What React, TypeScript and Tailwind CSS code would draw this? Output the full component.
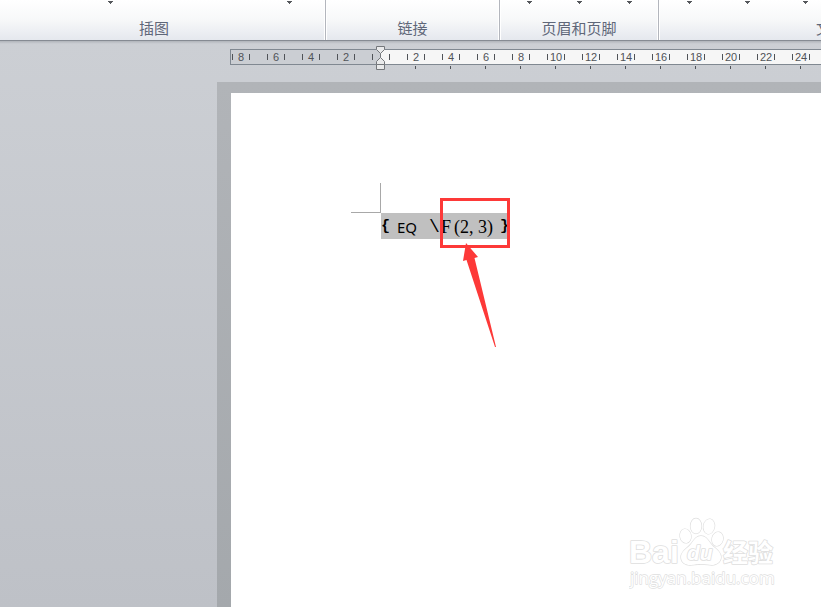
import clsx from 'clsx'

type Group = { label: string; size: string; menus: string[]; menuClass: string }

const GROUPS: Group[] = [
  { label: '插图', size: 'w-[324px] pr-4', menus: ['形状', '屏幕截图'], menuClass: 'w-[179px] first:ml-[21px]' },
  { label: '链接', size: 'w-[171px]', menus: [], menuClass: '' },
  { label: '页眉和页脚', size: 'w-[156px]', menus: ['页眉', '页脚', '页码'], menuClass: 'w-[50px] first:ml-[3px]' },
  { label: '文本', size: 'w-[342px]', menus: ['文本框', '文档部件', '艺术字'], menuClass: 'w-[58px]' },
]

// Ruler cells, two characters each. 0 is the left indent.
const RULER = [-8, -6, -4, -2, 0, 2, 4, 6, 8, 10, 12, 14, 16, 18, 20, 22, 24]

function Ribbon() {
  return (
    <header className="flex h-[41px] overflow-hidden border-b border-[#868b93] bg-linear-to-b from-white via-[#f7f8f9] to-[#e5e8ee]">
      {GROUPS.map((g, i) => (
        <div key={g.label} className="flex shrink-0">
          {i > 0 && <div className="w-[3px] border-x border-white bg-[#b3b6bd]" />}
          <section aria-label={g.label} className={clsx('flex shrink-0 flex-col', g.size)}>
            <div className="-mr-4 flex h-[19px]">
              {g.menus.map((m) => (
                <button key={m} aria-label={m} className={clsx('flex shrink-0 justify-center pt-px', g.menuClass)}>
                  <svg width="5" height="3" viewBox="0 0 5 3" shapeRendering="crispEdges" fill="#55585c">
                    <path d="M0 0h5v1H4v1H3v1H2V2H1V1H0z" />
                  </svg>
                </button>
              ))}
            </div>
            <div className="text-center text-[15px] leading-5 text-[#5f6779]">{g.label}</div>
          </section>
        </div>
      ))}
    </header>
  )
}

function IndentMarker() {
  return (
    <svg className="absolute -top-[3px] left-[146px]" width="9" height="25" viewBox="0 0 9 25" fill="#e9eaeb" stroke="#74777b">
      <path d="M.5.5h8v3l-4 4-4-4z" />
      <path d="M4.5 11.5l4 4v3h-8v-3z" />
      <path d="M.5 18.5h8v5h-8z" />
      <path d="M4.5 7.5v4" />
    </svg>
  )
}

function Ruler() {
  return (
    <div className="relative ml-[230px] text-[11px] text-[#505358]">
      <div className="flex h-4 overflow-hidden border border-r-0 border-[#808891] bg-[linear-gradient(90deg,#cbced3_150px,#f6f6f6_150px)]">
        <div className="-ml-2 flex">
          {RULER.map((n) => (
            <div key={n} className="flex w-[35px] shrink-0 items-center justify-between pr-2 pl-[9px]">
              <i className="h-1.5 w-px bg-[#505358]" />
              {n !== 0 && <span className="leading-[14px]">{Math.abs(n)}</span>}
              <i className="h-1.5 w-px bg-[#505358]" />
            </div>
          ))}
        </div>
      </div>
      <div className="flex h-[17px] overflow-hidden pt-px">
        <div className="ml-[168px] flex">
          {RULER.filter((n) => n > 0).map((n) => (
            <div key={n} className="flex w-[35px] shrink-0 justify-center">
              <i className="h-[3px] w-px bg-[#505358]" />
            </div>
          ))}
        </div>
      </div>
      <IndentMarker />
    </div>
  )
}

function FieldCode() {
  return (
    <div className="relative ml-[150px] flex h-[26px] w-[128px] items-center bg-[#c0c0c0] pt-0.5 font-['Liberation_Serif',serif] text-lg leading-6 whitespace-pre text-black">
      {/* margin corner */}
      <div className="absolute right-full bottom-full size-[30px] border-r border-b border-[#a8a8a8]" />
      <b className="w-4 font-['Liberation_Mono',monospace] text-[15px]">{'{'}</b>
      <span className="w-8 font-['Noto_Sans',sans-serif] text-[15px]">EQ</span>
      <span className="w-3 font-['Liberation_Mono',monospace]">\</span>
      <span className="w-[13px]">F</span>
      <span className="w-6">(2,</span>
      <span>3)</span>
      <b className="ml-auto font-['Liberation_Mono',monospace] text-[15px]">{'}'}</b>
      {/* callout */}
      <div className="absolute -top-[15px] left-[59px] h-[50px] w-[70px] border-3 border-[#fd3938]" />
      <svg className="absolute top-[30px] left-20" width="36" height="105" viewBox="0 0 36 105" fill="#fd3938">
        <path d="M5 0L17 14L13.5 15L35 104L34 104L5.500 17L2 18Z" />
      </svg>
    </div>
  )
}

function Watermark() {
  return (
    <svg
      className="absolute right-[44px] bottom-[16px]"
      width="148"
      height="76"
      viewBox="0 0 148 76"
      fill="#fff"
      stroke="#dedede"
      strokeWidth="1.6"
      strokeLinejoin="round"
      paintOrder="stroke"
      fontFamily="'Liberation Sans', sans-serif"
    >
      <text x="0" y="48" fontSize="32" fontWeight="700">Bai</text>
      <g strokeWidth="1.3">
        <ellipse cx="56.5" cy="21" rx="5.5" ry="7" transform="rotate(-10 56.5 21)" />
        <ellipse cx="67" cy="11" rx="5.5" ry="7.5" />
        <ellipse cx="80" cy="11.5" rx="5.5" ry="7.5" transform="rotate(10 80 11.5)" />
        <ellipse cx="88.5" cy="24" rx="5.5" ry="7" transform="rotate(15 88.5 24)" />
        <path d="M72 21c-5 0-7 4-10 8s-10 7-10 13 5 8 9 8 6-1 11-1 8 1 11 1 9-2 9-8-7-9-10-13-5-8-10-8z" />
      </g>
      <text x="58" y="45" fontSize="21" fontStyle="italic" fontWeight="700">du</text>
      <text x="94" y="47" fontSize="25" fontWeight="700" fontFamily="'Noto Sans CJK SC', sans-serif">经验</text>
      <text x="1" y="69" fontSize="17" strokeWidth="1.3" fontFamily="'Open Sans', sans-serif">jingyan.baidu.com</text>
    </svg>
  )
}

export default function App() {
  return (
    <div className="flex min-h-screen flex-col overflow-hidden bg-linear-to-b from-[#cdd0d5] to-[#bec1c7] font-['Liberation_Sans','Noto_Sans_CJK_SC',sans-serif]">
      <Ribbon />
      <div className="mb-[5px] h-[3px] bg-linear-to-b from-[#b0b4ba] to-[#cdd0d5]" />
      <Ruler />
      <main className="ml-[217px] flex flex-1 bg-linear-to-b from-[#b1b4b8] to-[#a4a8ac] pt-[11px] pl-3.5">
        <article className="relative flex-1 bg-white pt-[120px]">
          <FieldCode />
          <Watermark />
        </article>
      </main>
    </div>
  )
}
